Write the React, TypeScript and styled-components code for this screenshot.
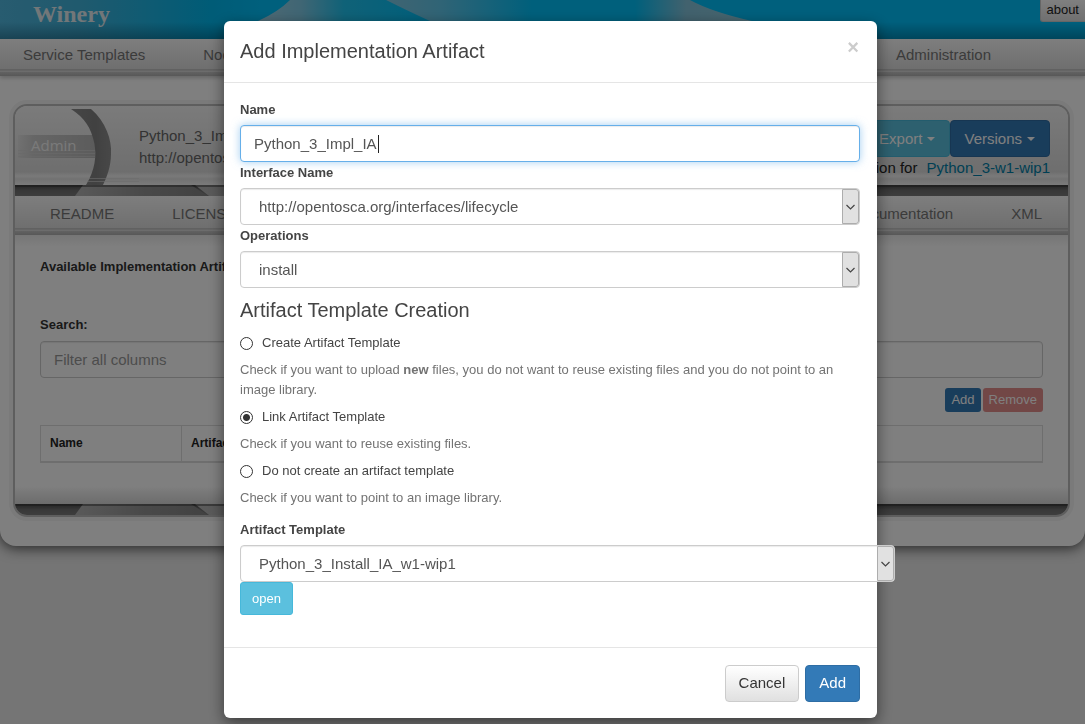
import React from "react";
import styled, { createGlobalStyle, css } from "styled-components";

const Global = createGlobalStyle`
  *, *::before, *::after { box-sizing: border-box; }
  body {
    margin: 0;
    background: #eaeaea;
    color: #444;
    font: 15px/22px "Liberation Sans", Arial, sans-serif;
  }
  button, input, select { font: inherit; color: inherit; margin: 0; }
  a { text-decoration: none; }
`;

/* ---------- page behind the dialog ---------- */

const Shell = styled.div`
  min-height: 100vh;
  background: #eaeaea;
`;

const Page = styled.div`
  background: #fff;
  border-radius: 0 0 16px 16px;
  box-shadow: 0 2px 14px rgba(0, 0, 0, 0.7);
  padding-bottom: 29px;
`;

const Banner = styled.header`
  position: relative;
  display: flex;
  justify-content: space-between;
  align-items: flex-start;
  height: 39px;
  padding-left: 33px;
  background:
    linear-gradient(to bottom, transparent 22px, rgba(0, 40, 60, 0.35)),
    linear-gradient(to right, #50b8e0 0, #40b4dc 80px, #00b8ee 210px, #00c0fa 260px);
`;

const Waves = styled.svg`
  position: absolute;
  left: 250px;
  top: 0;
  width: 510px;
  height: 39px;
`;

const Brand = styled.span`
  color: #e4eef2;
  font: bold 24px/28px "Liberation Serif", serif;
`;

const AboutButton = styled.button`
  height: 22px;
  padding: 0 6px 2px 5px;
  border: 1px solid #ccc;
  border-width: 0 0 1px 1px;
  border-radius: 0 0 0 3px;
  background: linear-gradient(#fff, #e0e0e0);
  color: #222;
  font-size: 13px;
  line-height: 18px;
`;

const Bar = styled.nav<{ $inset: number; $end: number; $tall?: boolean }>`
  display: flex;
  align-items: center;
  gap: 58px;
  height: ${(p) => (p.$tall ? 39 : 37)}px;
  padding: 0 ${(p) => p.$end}px ${(p) => (p.$tall ? 4 : 6)}px ${(p) => p.$inset}px;
  background: linear-gradient(
    #fcfcfc,
    #dedede calc(100% - 7px),
    #a8a8a8 calc(100% - 6px),
    #eee calc(100% - 5px),
    #c4c4c4 calc(100% - 4px),
    #b0b0b0
  );
  box-shadow: 0 2px 4px rgba(0, 0, 0, 0.2);
`;

const BarLink = styled.a<{ $push?: boolean }>`
  color: #777;
  white-space: nowrap;
  ${(p) => p.$push && css`margin-left: auto;`}
`;

const Card = styled.main`
  margin: 28px 15px 0 13px;
  border: 2px solid #bcbcbc;
  border-radius: 14px;
  box-shadow: 0 0 0 4px #f4f4f4;
  overflow: hidden;
`;

const CardHeader = styled.div`
  position: relative;
  display: flex;
  justify-content: space-between;
  height: 79px;
  background: linear-gradient(#f6f6f6, #ddd 66px, #f4f4f4 70px, #e4e4e4 73px, #f6f6f6);
`;

const HeaderArt = styled.svg`
  display: block;
  flex: none;
  width: 124px;
  height: 79px;
`;

const HeaderMain = styled.div`
  flex: 1;
  padding-top: 19px;
  color: #666;
  white-space: nowrap;
`;

const HeaderSide = styled.div`
  display: flex;
  flex-direction: column;
  align-items: flex-end;
  padding: 14px 18px 0 0;
  color: #222;
  white-space: nowrap;

  a { color: #007fa8; margin-left: 5px; }
`;

const ButtonRow = styled.div`
  display: flex;
`;

const MenuButton = styled.button<{ $tone: string; $edge: string }>`
  display: flex;
  align-items: center;
  gap: 5px;
  height: 37px;
  padding: 0 14px 0 13px;
  border: 1px solid ${(p) => p.$edge};
  border-radius: 4px;
  background: ${(p) => p.$tone};
  color: #fff;

  &::after {
    content: "";
    border: 4px solid transparent;
    border-top-color: #fff;
    border-bottom: 0;
  }
`;

const Band = styled.svg`
  display: block;
  width: 100%;
  height: 11px;
`;

const Content = styled.div`
  padding: 22px 25px 41px;
  background: linear-gradient(#ececec, #fff 12px, #fff calc(100% - 18px), #d8d8d8);
  color: #333;
  font-size: 13px;
  line-height: 20px;
`;

const ContentTitle = styled.div`
  font-weight: bold;
  margin-bottom: 38px;
`;

const SearchLabel = styled.label`
  display: block;
  font-weight: bold;
  margin-bottom: 6px;
`;

const fieldBox = css`
  display: block;
  width: 100%;
  height: 37px;
  padding: 0 13px;
  border: 1px solid #ccc;
  border-radius: 4px;
  background: #fff;
  box-shadow: inset 0 1px 1px rgba(0, 0, 0, 0.08);
  color: #555;
  font-size: 15px;
  outline: none;
`;

const SearchInput = styled.input`
  ${fieldBox}
  &::placeholder { color: #999; opacity: 1; }
`;

const Actions = styled.div`
  display: flex;
  justify-content: flex-end;
  gap: 2px;
  margin: 10px 0 13px;
`;

const SmallButton = styled.button<{ $tone: string }>`
  height: 24px;
  padding: 0 6px;
  border: 0;
  border-radius: 3px;
  background: ${(p) => p.$tone};
  color: #fff;
  font-size: 13px;
  line-height: 24px;
`;

const Table = styled.table`
  width: 100%;
  border-collapse: collapse;
  table-layout: fixed;

  th {
    height: 36px;
    padding: 0 8px 0 9px;
    border: 1px solid #ddd;
    border-bottom-width: 2px;
    text-align: left;
    font-size: 12px;
    color: #222;
  }
  th:first-child { width: 141px; }
`;

/* ---------- dialog ---------- */

const Backdrop = styled.div`
  position: fixed;
  inset: 0;
  display: flex;
  justify-content: center;
  align-items: flex-start;
  padding: 21px 0 0 16px;
  background: rgba(0, 0, 0, 0.5);
`;

const Dialog = styled.section`
  width: 100%;
  max-width: 653px;
  border-radius: 6px;
  background: #fff;
  box-shadow: 0 5px 15px rgba(0, 0, 0, 0.5);
`;

const DialogHeader = styled.div`
  display: flex;
  justify-content: space-between;
  align-items: flex-start;
  padding: 17px 16px 18px;
  border-bottom: 1px solid #e5e5e5;
`;

const Heading = styled.h4`
  margin: 0;
  font-size: 20px;
  line-height: 26px;
  font-weight: normal;
`;

const CloseButton = styled.button`
  padding: 0 2px;
  border: 0;
  background: none;
  color: #ccc;
  font-weight: bold;
  font-size: 20px;
  line-height: 18px;
`;

const DialogBody = styled.form`
  padding: 16px 17px 32px 16px;
  font-size: 13px;
  line-height: 20px;
`;

const FieldLabel = styled.label`
  display: block;
  padding-top: 1px;
  margin-bottom: 5px;
  font-weight: bold;
`;

const Field = styled.div<{ $wide?: boolean }>`
  position: relative;
  width: ${(p) => (p.$wide ? "calc(100% + 35px)" : "100%")};
`;

const NameInput = styled.input`
  ${fieldBox}
  border-color: #66afe9;
  box-shadow: inset 0 1px 1px rgba(0, 0, 0, 0.08), 0 0 8px rgba(102, 175, 233, 0.6);
`;

const TextCursor = styled.span`
  position: absolute;
  left: 138px;
  top: 10px;
  width: 1px;
  height: 18px;
  background: #222;
`;

const Select = styled.select`
  ${fieldBox}
  padding-left: 18px;
  appearance: none;
`;

const SelectArrow = styled.svg`
  position: absolute;
  top: 1px;
  right: 1px;
  width: 17px;
  height: 35px;
  border: 1px solid #adadad;
  border-radius: 0 3px 3px 0;
  background: #e1e1e1;
  pointer-events: none;
`;

const SectionTitle = styled(Heading)`
  padding: 9px 0 10px;
`;

const RadioRow = styled.label`
  display: flex;
  align-items: center;
  gap: 9px;
  margin-bottom: 7px;
`;

const Radio = styled.input`
  appearance: none;
  width: 13px;
  height: 13px;
  border: 1px solid #333;
  border-radius: 50%;
  background: #fff;

  &:checked { background: radial-gradient(circle, #333 3px, #fff 4px); }
`;

const Help = styled.p`
  margin: 0 0 7px;
  color: #737373;
`;

const TemplateGroup = styled.div`
  padding-top: 4px;
`;

const OpenButton = styled.button`
  display: block;
  height: 33px;
  padding: 0 11px;
  border: 1px solid #46b8da;
  border-radius: 3px;
  background: #5bc0de;
  color: #fff;
  font-size: 13px;
`;

const DialogFooter = styled.div`
  display: flex;
  justify-content: flex-end;
  gap: 6px;
  padding: 17px 17px 16px;
  border-top: 1px solid #e5e5e5;
`;

const FooterButton = styled.button<{ $primary?: boolean }>`
  height: 37px;
  padding: 0 13px 2px;
  border: 1px solid ${(p) => (p.$primary ? "#2e6da4" : "#ccc")};
  border-radius: 4px;
  background: ${(p) => (p.$primary ? "#337ab7" : "linear-gradient(#fff, #e0e0e0)")};
  color: ${(p) => (p.$primary ? "#fff" : "#333")};
`;

function ArrowBox() {
  return (
    <SelectArrow viewBox="0 0 15 33" aria-hidden="true">
      <path d="M3.500 15l4 4 4-4" fill="none" stroke="#444" strokeWidth="1.2" />
    </SelectArrow>
  );
}

function SelectField({ id, label, value, wide }: { id: string; label: string; value: string; wide?: boolean }) {
  return (
    <>
      <FieldLabel htmlFor={id}>{label}</FieldLabel>
      <Field $wide={wide}>
        <Select id={id} defaultValue={value}>
          <option>{value}</option>
        </Select>
        <ArrowBox />
      </Field>
    </>
  );
}

function BannerWaves() {
  return (
    <Waves viewBox="0 0 510 39" aria-hidden="true">
      <defs>
        <linearGradient id="wave-a" x1="0" x2="1">
          <stop offset="0" stopColor="#a0d4ea" />
          <stop offset="0.25" stopColor="#80cce8" />
          <stop offset="0.5" stopColor="#20c4f0" />
          <stop offset="1" stopColor="#00c0f8" />
        </linearGradient>
        <linearGradient id="wave-b" x1="0" x2="1">
          <stop offset="0" stopColor="#80c8e4" />
          <stop offset="0.15" stopColor="#60c8ec" />
          <stop offset="0.4" stopColor="#00c0f8" />
          <stop offset="0.68" stopColor="#00c0f8" />
          <stop offset="0.82" stopColor="#84c4dc" />
          <stop offset="1" stopColor="#90ccdf" />
        </linearGradient>
      </defs>
      <path d="M8 21Q28 12 40 0H136L180 21Z" fill="url(#wave-a)" />
      <path d="M136 0H440Q462 12 502 21H180Q160 12 136 0Z" fill="url(#wave-b)" />
    </Waves>
  );
}

function DarkBand({ id }: { id: string }) {
  return (
    <Band aria-hidden="true">
      <defs>
        <linearGradient id={id} x1="0" y1="0" x2="0" y2="1">
          <stop offset="0" stopColor="#484848" />
          <stop offset="0.5" stopColor="#707070" />
          <stop offset="1" stopColor="#7c7c7c" />
        </linearGradient>
        <linearGradient id={id + "-sheen"} x1="0" x2="1">
          <stop offset="0" stopColor="#b4b4b4" />
          <stop offset="0.5" stopColor="#949494" />
          <stop offset="1" stopColor="#848484" />
        </linearGradient>
        <linearGradient id={id + "-tail"} x1="0" x2="1">
          <stop offset="0" stopColor="#b8b8b8" />
          <stop offset="1" stopColor="#b8b8b8" stopOpacity="0" />
        </linearGradient>
      </defs>
      <rect width="100%" height="11" fill={`url(#${id})`} />
      <path d="M68 0H176L193 11H60Z" fill={`url(#${id}-sheen)`} />
      <path d="M180 0H460V11H194Z" fill={`url(#${id}-tail)`} />
      <rect width="100%" height="2" fill="#333" opacity="0.5" />
    </Band>
  );
}

export default function App() {
  return (
    <Shell>
      <Global />
      <Page>
        <Banner>
          <BannerWaves />
          <Brand>Winery</Brand>
          <AboutButton>about</AboutButton>
        </Banner>
        <Bar $inset={23} $end={94}>
          <BarLink href="#service">Service Templates</BarLink>
          <BarLink href="#node">Node</BarLink>
          <BarLink href="#admin" $push>Administration</BarLink>
        </Bar>
        <Card>
          <CardHeader>
            <HeaderArt viewBox="0 0 124 79" aria-hidden="true">
              <defs>
                <linearGradient id="ring" x1="0" y1="0" x2="1" y2="0">
                  <stop offset="0" stopColor="#8c8c8c" />
                  <stop offset="0.6" stopColor="#828282" />
                  <stop offset="1" stopColor="#909090" />
                </linearGradient>
                <linearGradient id="plate" x1="0" y1="0" x2="1" y2="0">
                  <stop offset="0" stopColor="#ccc" stopOpacity="0.2" />
                  <stop offset="0.2" stopColor="#ccc" />
                  <stop offset="1" stopColor="#b8b8b8" />
                </linearGradient>
              </defs>
              <path d="M3 29H78L80 40V52H3Z" fill="url(#plate)" />
              <path d="M3 44.500H80M3 47.500H80M3 50.500H80" stroke="#d4d4d4" strokeOpacity="0.6" />
              <path d="M56 3H76C91 16 97 34 96 48C96 60 92 71 88 79H71C80 64 82 50 79 36C76 22 70 12 56 3Z" fill="url(#ring)" />
              <path d="M74 72.500H124M72 75.500H124" stroke="#d8d8d8" strokeOpacity="0.6" />
              <text x="16" y="45" fill="#f4f4f4" fontFamily="Open Sans, sans-serif" fontSize="15">Admin</text>
            </HeaderArt>
            <HeaderMain>
              <div>Python_3_Impl</div>
              <div>http://opentosca.org</div>
            </HeaderMain>
            <HeaderSide>
              <ButtonRow>
                <MenuButton $tone="#5bc0de" $edge="#46b8da">Export</MenuButton>
                <MenuButton $tone="#337ab7" $edge="#2e6da4">Versions</MenuButton>
              </ButtonRow>
              <div>
                Implementation for <a href="#type">Python_3-w1-wip1</a>
              </div>
            </HeaderSide>
          </CardHeader>
          <DarkBand id="band-top" />
          <Bar $inset={35} $end={26} $tall>
            <BarLink href="#readme">README</BarLink>
            <BarLink href="#license">LICENSE</BarLink>
            <BarLink href="#documentation" $push>Documentation</BarLink>
            <BarLink href="#xml">XML</BarLink>
          </Bar>
          <Content>
            <ContentTitle>Available Implementation Artifacts</ContentTitle>
            <SearchLabel htmlFor="search">Search:</SearchLabel>
            <SearchInput id="search" placeholder="Filter all columns" />
            <Actions>
              <SmallButton $tone="#337ab7">Add</SmallButton>
              <SmallButton $tone="#e58e8c">Remove</SmallButton>
            </Actions>
            <Table>
              <thead>
                <tr>
                  <th>Name</th>
                  <th>Artifact</th>
                </tr>
              </thead>
            </Table>
          </Content>
          <DarkBand id="band-bottom" />
        </Card>
      </Page>

      <Backdrop>
        <Dialog role="dialog" aria-labelledby="dialog-title">
          <DialogHeader>
            <Heading id="dialog-title">Add Implementation Artifact</Heading>
            <CloseButton aria-label="Close">×</CloseButton>
          </DialogHeader>
          <DialogBody>
            <FieldLabel htmlFor="name">Name</FieldLabel>
            <Field>
              <NameInput id="name" defaultValue="Python_3_Impl_IA" />
              <TextCursor />
            </Field>
            <SelectField id="interface" label="Interface Name" value="http://opentosca.org/interfaces/lifecycle" />
            <SelectField id="operations" label="Operations" value="install" />
            <SectionTitle>Artifact Template Creation</SectionTitle>
            <RadioRow>
              <Radio type="radio" name="creation" />
              Create Artifact Template
            </RadioRow>
            <Help>
              Check if you want to upload <b>new</b> files, you do not want to reuse existing files and you do not point to an
              <br />
              image library.
            </Help>
            <RadioRow>
              <Radio type="radio" name="creation" defaultChecked />
              Link Artifact Template
            </RadioRow>
            <Help>Check if you want to reuse existing files.</Help>
            <RadioRow>
              <Radio type="radio" name="creation" />
              Do not create an artifact template
            </RadioRow>
            <Help>Check if you want to point to an image library.</Help>
            <TemplateGroup>
              <SelectField id="template" label="Artifact Template" value="Python_3_Install_IA_w1-wip1" wide />
              <OpenButton type="button">open</OpenButton>
            </TemplateGroup>
          </DialogBody>
          <DialogFooter>
            <FooterButton>Cancel</FooterButton>
            <FooterButton $primary>Add</FooterButton>
          </DialogFooter>
        </Dialog>
      </Backdrop>
    </Shell>
  );
}
